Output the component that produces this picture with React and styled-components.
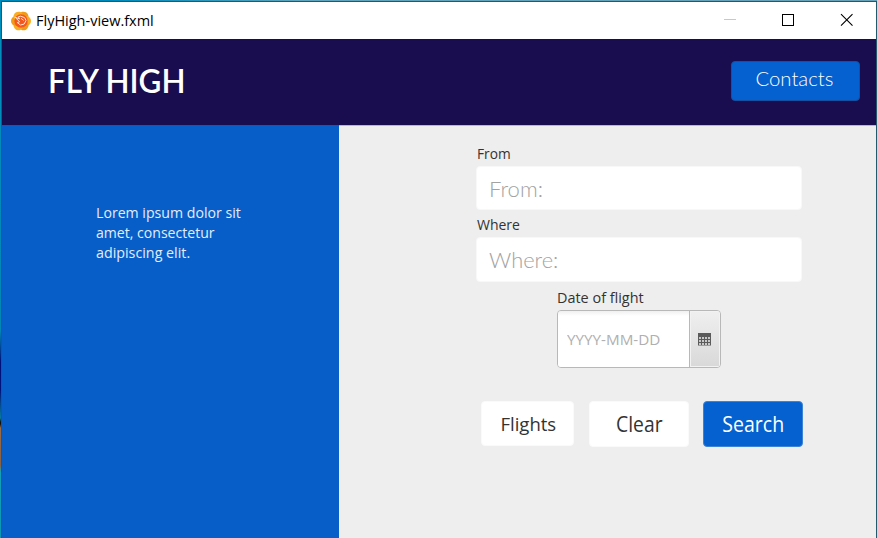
import React from "react";
import styled, { createGlobalStyle } from "styled-components";

const GlobalStyle = createGlobalStyle`
  * { box-sizing: border-box; }
  body { margin: 0; overflow: hidden; font-family: "Open Sans", "Noto Sans", sans-serif; }
  button, input { font: inherit; }
`;

const Desktop = styled.div`
  width: 877px;
  height: 538px;
  padding: 1px 0 0 1px;
  background:
    linear-gradient(90deg, #0089b8 0, #0089b8 110px, #5fa5bd 300px, #68a2b8 877px) 0 0 / 877px 1px no-repeat,
    linear-gradient(180deg, #008fbd 0, #0088b5 330px, #00107a 362px, #00147c 390px, #087a9c 418px, #111 422px, #111 424px, #9a6a45 428px, #866045 465px, #11a2b7 472px, #0898b4 538px);
`;

const Window = styled.div`
  display: flex;
  flex-direction: column;
  width: 876px;
  height: 537px;
  border: solid #22596d;
  border-width: 1px 1px 0 1px;
`;

const TitleBar = styled.div`
  display: flex;
  align-items: center;
  flex: none;
  height: 37px;
  padding-left: 8px;
  background: #fff;
`;

const Text = styled.span`
  display: inline-block;
  flex: none;
  white-space: nowrap;
  font-family: ${(p) => p.$font || "inherit"};
  font-size: ${(p) => p.$size}px;
  font-weight: ${(p) => p.$weight || 400};
  line-height: ${(p) => p.$line || 20}px;
  color: ${(p) => p.$color || "#333"};
  transform: scaleX(${(p) => p.$stretch || 1});
  transform-origin: ${(p) => p.$origin || "left"};
`;

const WindowTitle = styled(Text)`
  margin-left: 4px;
`;

const ContactsText = styled(Text)`
  margin: 0 2px 4px 0;
`;

const Placeholder = styled(Text)`
  margin-top: 1px;
`;

const WindowControls = styled.div`
  display: flex;
  margin-left: auto;
  height: 37px;
`;

const ControlIcon = styled.svg`
  width: 59px;
  height: 37px;
`;

const Header = styled.header`
  display: flex;
  align-items: center;
  justify-content: space-between;
  flex: none;
  height: 86px;
  padding: 0 16px 2px 46px;
  background: #190d4f;
`;

const Button = styled.button`
  display: flex;
  align-items: center;
  justify-content: center;
  flex: none;
  width: ${(p) => p.$w}px;
  height: ${(p) => p.$h}px;
  margin: 0;
  padding: 0;
  border: 1px solid ${(p) => p.$edge || "#fafafa"};
  border-radius: 4px;
  background: ${(p) => (p.$primary ? "#0461cf" : "#fff")};
`;

const Body = styled.div`
  display: flex;
  flex: 1;
  min-height: 0;
`;

const Sidebar = styled.aside`
  display: flex;
  flex-direction: column;
  align-items: flex-start;
  width: 337px;
  padding: 77px 0 0 94px;
  background: #075ec8;
  border-top: 1px solid #1a55ad;
`;

const Main = styled.main`
  display: flex;
  flex-direction: column;
  align-items: flex-start;
  flex: 1;
  padding: 18px 0 0 137px;
  background: #eee;
  border-top: 1px solid #bbb7d0;
`;

const Field = styled.label`
  display: flex;
  flex-direction: column;
  align-items: flex-start;
  height: ${(p) => p.$h}px;
  margin-left: ${(p) => p.$indent || 0}px;
`;

const FieldLabel = styled(Text)`
  margin-left: ${(p) => p.$inset || 0}px;
`;

const InputBox = styled.span`
  display: flex;
  align-items: center;
  width: 326px;
  height: ${(p) => p.$h}px;
  margin-top: 2px;
  padding-left: 12px;
  background: #fff;
  border: 1px solid #f8f8f8;
  border-radius: 4px;
`;

const DateBox = styled.span`
  display: flex;
  width: 164px;
  height: 58px;
  margin-top: 2px;
  overflow: hidden;
  border: 1px solid #b8b8b8;
  border-radius: 4px;
`;

const DateValue = styled.span`
  display: flex;
  align-items: center;
  width: 132px;
  padding-left: 9px;
  background: linear-gradient(#f0f0f0 0, #fff 5px);
  border-right: 1px solid #b8b8b8;
`;

const CalendarButton = styled.span`
  display: flex;
  align-items: center;
  justify-content: center;
  flex: 1;
  padding-right: 1px;
  border: 1px solid #f2f2f2;
  background: linear-gradient(#efefef, #d9d9d9);
`;

const Actions = styled.div`
  display: flex;
  align-items: flex-start;
  margin: 33px 0 0 5px;
`;

const Gap = styled.span`
  flex: none;
  width: ${(p) => p.$w}px;
`;

function AppIcon() {
  const petals = [0, 60, 120, 180, 240, 300];
  return (
    <svg width="22" height="22" viewBox="0 0 22 22">
      {petals.map((a) => (
        <circle key={a} cx="11" cy="6" r="5" fill={a % 120 ? "#f9ae22" : "#f09a1a"} transform={`rotate(${a + 30} 11 11)`} />
      ))}
      <circle cx="11" cy="11" r="6.7" fill="#f4581f" />
      <path d="M4.8 7 L9.5 9 L8.3 6.8 L10.5 6.2 L14.6 7.6 L16 10.5 L14.2 14 L10.5 15 L7.3 12.6 L9.6 11.8 Z M11 8.3 L13.7 10.4" fill="none" stroke="#ffe5d5" strokeWidth="1" />
    </svg>
  );
}

function CalendarIcon() {
  const dots = [];
  for (let r = 0; r < 3; r++)
    for (let c = 0; c < 4; c++)
      dots.push(<rect key={`${r}${c}`} x={1 + c * 3} y={4 + r * 3} width="2" height="2" fill="#c8c8c8" />);
  return (
    <svg width="13" height="13" viewBox="0 0 13 13">
      <rect y="0" width="13" height="12.5" fill="#5b5b5b" />
      {dots}
    </svg>
  );
}

const GEOMETRIC = '"Lato", sans-serif';

export default function App() {
  return (
    <>
      <GlobalStyle />
      <Desktop>
        <Window>
          <TitleBar>
            <AppIcon />
            <WindowTitle $size={14} $stretch={1.035} $color="#000">FlyHigh-view.fxml</WindowTitle>
            <WindowControls>
              <ControlIcon viewBox="0 0 59 37"><path d="M25 17.5h12" stroke="#c8c8c8" /></ControlIcon>
              <ControlIcon viewBox="0 0 59 37"><rect x="24.5" y="12.5" width="11" height="11" fill="none" stroke="#000" /></ControlIcon>
              <ControlIcon viewBox="0 0 59 37"><path d="M24 12.2l11.5 11.5M35.5 12.2L24 23.7" stroke="#000" strokeWidth="1.1" /></ControlIcon>
            </WindowControls>
          </TitleBar>
          <Header>
            <Text $font={GEOMETRIC} $size={32} $line={40} $color="#fff" $weight={600} $stretch={0.98}>FLY HIGH</Text>
            <Button $w={129} $h={40} $primary $edge="#164f9f">
              <ContactsText $font={GEOMETRIC} $size={19} $weight={300} $color="#fff" $stretch={1.07} $origin="center">Contacts</ContactsText>
            </Button>
          </Header>
          <Body>
            <Sidebar>
              <Text $size={14} $stretch={1.01} $color="#e3edf9">Lorem ipsum dolor sit</Text>
              <Text $size={14} $stretch={1.005} $color="#e3edf9">amet, consectetur</Text>
              <Text $size={14} $stretch={1.02} $color="#e3edf9">adipiscing elit.</Text>
            </Sidebar>
            <Main>
              <Field $h={71}>
                <FieldLabel $size={14} $inset={1} $stretch={0.98}>From</FieldLabel>
                <InputBox $h={44}><Placeholder $font={GEOMETRIC} $size={21} $weight={300} $stretch={1.05} $color="#a2a2a2">From:</Placeholder></InputBox>
              </Field>
              <Field $h={73}>
                <FieldLabel $size={14} $inset={1}>Where</FieldLabel>
                <InputBox $h={45}><Placeholder $font={GEOMETRIC} $size={21} $weight={300} $stretch={1.04} $color="#a2a2a2">Where:</Placeholder></InputBox>
              </Field>
              <Field $h={80} $indent={81}>
                <FieldLabel $size={14} $stretch={1.03}>Date of flight</FieldLabel>
                <DateBox>
                  <DateValue><Text $size={15} $stretch={1.015} $color="#b0b0b0">YYYY-MM-DD</Text></DateValue>
                  <CalendarButton><CalendarIcon /></CalendarButton>
                </DateBox>
              </Field>
              <Actions>
                <Button $w={93} $h={45}><Text $size={19} $stretch={0.975} $origin="right">Flights</Text></Button>
                <Gap $w={15} />
                <Button $w={100} $h={46}><Text $size={21} $stretch={0.92} $origin="center">Clear</Text></Button>
                <Gap $w={14} />
                <Button $w={100} $h={46} $primary $edge="#3d83d5"><Text $size={21} $stretch={0.93} $color="#fff" $origin="center">Search</Text></Button>
              </Actions>
            </Main>
          </Body>
        </Window>
      </Desktop>
    </>
  );
}
